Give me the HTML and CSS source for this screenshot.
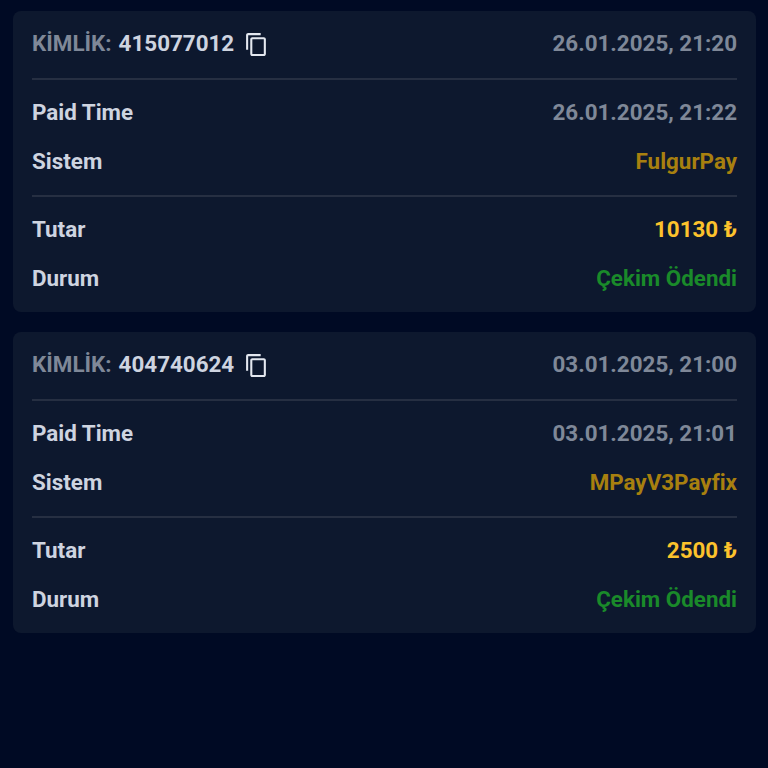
FILE: index.html
```html
<!DOCTYPE html>
<html lang="tr">
<head>
    <meta charset="utf-8">
    <title>Çekim Geçmişi</title>
    <link rel="stylesheet" href="styles.css">
</head>
<body>
    <div class="card-list">
        <div class="card">
            <div class="card-head">
                <span class="id-label">KİMLİK:</span>
                <span class="id-value">415077012</span>
                <svg class="copy-icon" viewBox="0 0 24 24" width="25" height="25"><path d="M16 1H4c-1.1 0-2 .9-2 2v14h2V3h12V1zm3 4H8c-1.1 0-2 .9-2 2v14c0 1.1.9 2 2 2h11c1.1 0 2-.9 2-2V7c0-1.1-.9-2-2-2zm0 16H8V7h11v14z"/></svg>
                <span class="date">26.01.2025, 21:20</span>
            </div>
            <div class="section">
                <div class="row"><span class="key">Paid Time</span><span class="date">26.01.2025, 21:22</span></div>
                <div class="row"><span class="key">Sistem</span><span class="system">FulgurPay</span></div>
            </div>
            <div class="section">
                <div class="row"><span class="key">Tutar</span><span class="amount">10130 ₺</span></div>
                <div class="row"><span class="key">Durum</span><span class="status">Çekim Ödendi</span></div>
            </div>
        </div>
        <div class="card">
            <div class="card-head">
                <span class="id-label">KİMLİK:</span>
                <span class="id-value">404740624</span>
                <svg class="copy-icon" viewBox="0 0 24 24" width="25" height="25"><path d="M16 1H4c-1.1 0-2 .9-2 2v14h2V3h12V1zm3 4H8c-1.1 0-2 .9-2 2v14c0 1.1.9 2 2 2h11c1.1 0 2-.9 2-2V7c0-1.1-.9-2-2-2zm0 16H8V7h11v14z"/></svg>
                <span class="date">03.01.2025, 21:00</span>
            </div>
            <div class="section">
                <div class="row"><span class="key">Paid Time</span><span class="date">03.01.2025, 21:01</span></div>
                <div class="row"><span class="key">Sistem</span><span class="system">MPayV3Payfix</span></div>
            </div>
            <div class="section">
                <div class="row"><span class="key">Tutar</span><span class="amount">2500 ₺</span></div>
                <div class="row"><span class="key">Durum</span><span class="status">Çekim Ödendi</span></div>
            </div>
        </div>
    </div>
</body>
</html>
```

FILE: styles.css
```css
body {
    margin: 0;
    min-height: 768px;
    background-color: #000a24;
    font-family: Roboto, sans-serif;
    font-size: 22.4px;
    font-weight: 700;
    color: #ced4e0;
}

.card-list { display: flex; flex-direction: column; gap: 20px; padding: 11.4px 12px 0 13px; }
.card { background-color: #0d182e; border-radius: 8px; padding: 0 19px; }
.card-head { display: flex; align-items: center; height: 67px; padding-bottom: 3.4px; box-sizing: border-box; }
.id-label { color: #7f8898; margin-right: 7px; }
.id-value { color: #ced4e0; }
.copy-icon { fill: #e4e8f0; margin-left: 10px; margin-top: 3px; }
.date { color: #7f8898; margin-left: auto; }
.section { border-top: 2px solid #262f42; padding: 7.3px 0 9.5px; }
.row { display: flex; justify-content: space-between; align-items: center; height: 49px; }
.system { color: #a8800f; }
.amount { color: #fcc22c; }
.status { color: #1a8a2a; }
```
